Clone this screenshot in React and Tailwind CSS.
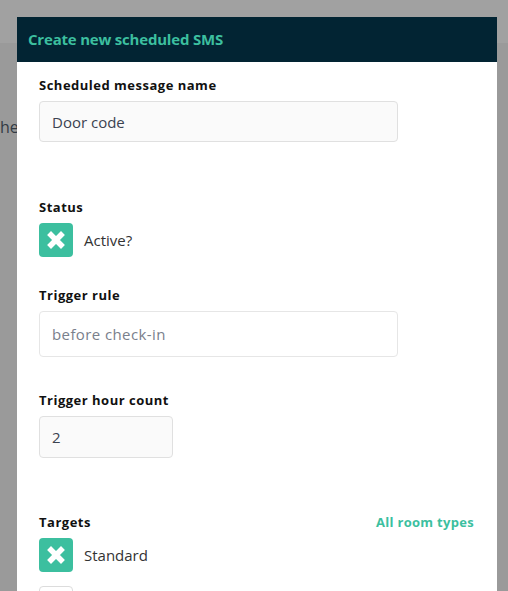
import React, { useState } from 'react';

const font = { fontFamily: '"Open Sans", "Liberation Sans", sans-serif' };

// Square teal toggle with a chunky white cross, or an empty box when off
const CrossBox = ({ checked, onClick }) => (
    <button
        type="button"
        onClick={onClick}
        className={`w-[34px] h-[34px] rounded-[4px] flex items-center justify-center shrink-0 ${checked ? 'bg-[#3cbf9f]' : 'bg-white border border-[#dcdcdc]'}`}
    >
        {checked && (
            <svg width="34" height="34" viewBox="0 0 34 34">
                <path d="M12 12 L22 22 M22 12 L12 22" stroke="#fff" strokeWidth="5.5" strokeLinecap="square" />
            </svg>
        )}
    </button>
);

const Label = ({ children, className = '' }) => (
    <div className={`text-[13px] leading-[20px] font-bold tracking-[0.5px] text-[#111] mb-[6px] ${className}`}>{children}</div>
);

const App = () => {
    const [active, setActive] = useState(true);
    const [standard, setStandard] = useState(true);
    const [deluxe, setDeluxe] = useState(false);

    return (
        <div className="relative w-[508px] h-[591px] overflow-hidden bg-[#9a9a9a]" style={font}>
            {/* Page behind the dialog, dimmed */}
            <div className="h-[43px] bg-[#a1a1a1]" />
            <div className="pt-[74px] text-[16px] leading-[20px] text-[#333a44]">he</div>

            {/* Dialog */}
            <div className="absolute left-[17px] top-[17px] w-[480px] h-[574px] bg-white">
                <div className="h-[45px] bg-[#022433] flex items-center pl-[11px]">
                    <h2 className="text-[15px] font-bold tracking-[-0.2px] text-[#3cbf9f]">Create new scheduled SMS</h2>
                </div>

                <div className="pl-[22px] pr-[23px] pt-[13px]">
                    <Label>Scheduled message name</Label>
                    <input
                        defaultValue="Door code"
                        className="w-[359px] h-[41px] px-[12px] bg-[#fafafa] border border-[#e0e0e0] rounded-[4px] text-[15px] text-[#3c4250] outline-none"
                    />

                    <Label className="mt-[55px]">Status</Label>
                    <div className="flex items-center gap-[11px]">
                        <CrossBox checked={active} onClick={() => setActive(!active)} />
                        <span className="text-[15px] text-[#333]">Active?</span>
                    </div>

                    <Label className="mt-[28px]">Trigger rule</Label>
                    <input
                        placeholder="before check-in"
                        className="w-[359px] h-[46px] px-[12px] bg-white border border-[#e6e6e6] rounded-[4px] text-[15px] tracking-[0.4px] text-[#3c4250] placeholder-[#7a808c] outline-none"
                    />

                    <Label className="mt-[33px]">Trigger hour count</Label>
                    <input
                        defaultValue="2"
                        className="w-[134px] h-[42px] px-[12px] bg-[#fafafa] border border-[#e0e0e0] rounded-[4px] text-[15px] text-[#3c4250] outline-none"
                    />

                    <div className="mt-[54px] flex items-start justify-between">
                        <Label>Targets</Label>
                        <button className="text-[13px] leading-[20px] font-bold tracking-[0.3px] text-[#3cbf9f]">All room types</button>
                    </div>
                    <div className="flex flex-col gap-[14px]">
                        <div className="flex items-center gap-[11px]">
                            <CrossBox checked={standard} onClick={() => setStandard(!standard)} />
                            <span className="text-[15px] text-[#333]">Standard</span>
                        </div>
                        <div className="flex items-center gap-[11px]">
                            <CrossBox checked={deluxe} onClick={() => setDeluxe(!deluxe)} />
                        </div>
                    </div>
                </div>
            </div>
        </div>
    );
};

export default App;
